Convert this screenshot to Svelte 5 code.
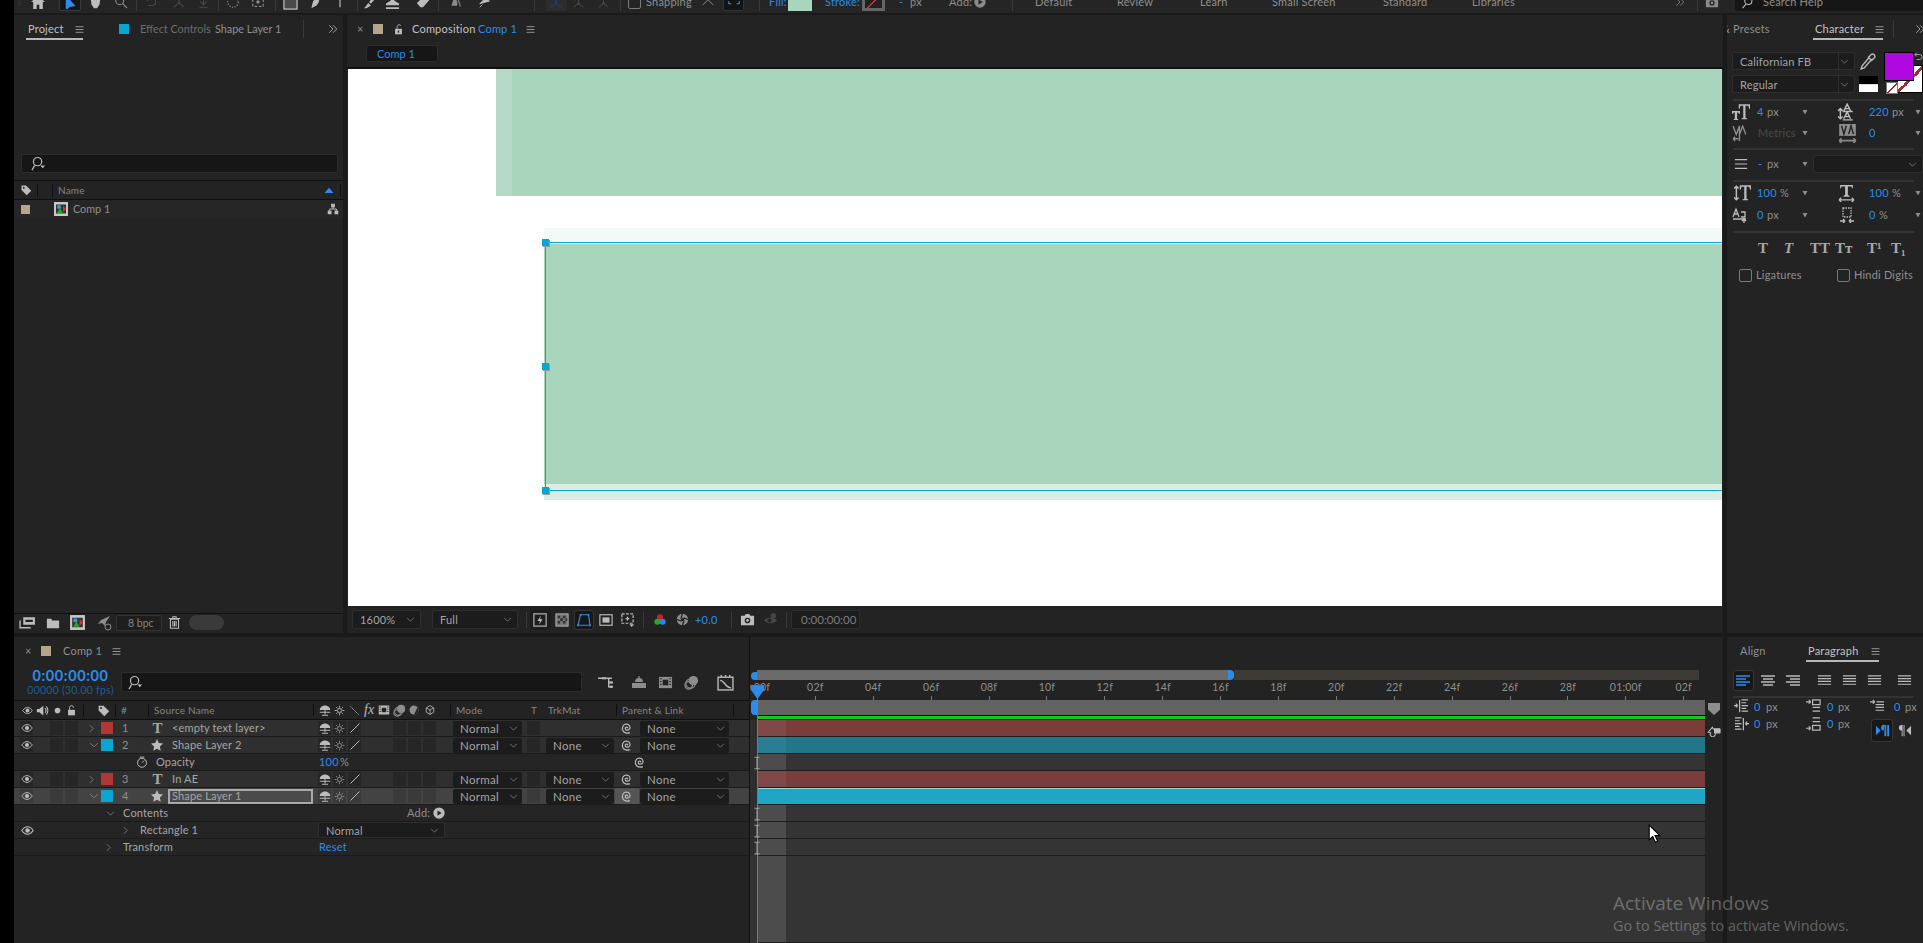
<script>
const F = 'fill="currentColor"';
const S = 'fill="none" stroke="currentColor" stroke-width="1.3"';
const I = {
  grip: `<path d="M5 1h6M5 4h6M5 7h6M5 10h6M5 13h6" ${S} stroke-dasharray="1 1"/>`,
  home: `<path d="M8 1 0 8h2.5v8h4v-5h3v5h4V8H16z" ${F}/>`,
  arrow: `<path d="M2 0v16l4-4 6-1z" ${F} transform="translate(1 -1) scale(1.2)"/>`,
  hand: `<path d="M2 3h12l-1 7-3 5H6L3 10z" ${F}/>`,
  zoom: `<circle cx="6.5" cy="6.5" r="4.5" ${S}/><path d="m10 10 5 5" ${S} stroke-width="2"/>`,
  rot: `<path d="M3 4h7a4 4 0 0 1 1 8H6M3 4l3-3M3 4l3 3" ${S}/>`,
  axis: `<path d="M8 2v7M8 9l-6 5M8 9l6 5" ${S}/><circle cx="8" cy="9" r="1.5" ${F}/>`,
  down: `<path d="M8 1v9M4 7l4 4 4-4" ${S} stroke-width="2"/><path d="M3 14h10" ${S}/>`,
  dashc: `<circle cx="8" cy="8" r="6" ${S} stroke-dasharray="1.5 1.5"/>`,
  dashb: `<path d="M2 2h12v11H2z" ${S} stroke-dasharray="3 2"/><circle cx="8" cy="8" r="2" ${F}/>`,
  rect: `<rect x="1" y="1" width="14" height="14" fill="#4a4a4a" stroke="#ccc" stroke-width="1.2"/>`,
  pen: `<path d="M12 1c2 5-1 10-5 12l-4 2 1-5c1-5 4-8 8-9z" ${F}/>`,
  ttool: `<path d="M3 3h10v2H9v9H7V5H3z" ${F}/>`,
  brush: `<path d="M13 1 7 8l2 2 6-7zM6 9l3 3-5 3H1c2-1 3-4 5-6z" ${F}/>`,
  stamp: `<path d="M6 1h4v5l5 3v2H1V9l5-3zM1 13h14v2H1z" ${F}/>`,
  erase: `<path d="M10 1 1 9l4 5h3l7-8z" ${F}/>`,
  roto: `<path d="M6 2c3 1 5 4 4 10H3z" ${F}/><path d="M11 3l3 10" ${S}/>`,
  pin: `<path d="M2 10 9 3l4 4-4 1zM2 14l3-3" ${F} stroke="currentColor"/>`,
  snapc: `<path d="M2 7v3h3M14 7v3h-3M6 5h1M9 5h1" ${S} stroke-width="1.6"/>`,
  chevR: `<path d="m5 2 6 6-6 6" ${S}/>`,
  chevD: `<path d="m2 5 6 6 6-6" ${S}/>`,
  chevU: `<path d="m1 12 7-7 7 7" ${S} stroke-width="1.8"/>`,
  menu: `<path d="M1 3h14M1 8h14M1 13h14" ${S}/>`,
  dbl: `<path d="m2 2 6 6-6 6M8 2l6 6-6 6" ${S} stroke-width="2.4"/>`,
  lock: `<rect x="3" y="7" width="10" height="8" ${F}/><path d="M5 7V4a3 3 0 0 1 6 0" ${S} stroke-width="1.6"/>`,
  unlock: `<rect x="3" y="7" width="10" height="8" ${F}/><path d="M6 7V3.5a3 3 0 0 1 5.5-1" ${S} stroke-width="1.6"/><rect x="7" y="9.5" width="2" height="3" fill="#222"/>`,
  search: `<circle cx="9" cy="6" r="4.4" ${S}/><path d="M6 10l-4 5" ${S} stroke-width="1.6"/>`,
  searchd: `<circle cx="7" cy="6" r="4.4" ${S}/><path d="M4 10l-3 5" ${S} stroke-width="1.6"/><path d="M10 10h5l-2.5 3z" ${F}/>`,
  tag: `<path d="M2 2h6l7 7-6 6-7-7z" ${F}/><circle cx="5" cy="5" r="1.2" fill="#222"/>`,
  tri: `<path d="M2 12 8 5l6 7z" ${F}/>`,
  triD: `<path d="M3 4h10l-5 9z" ${F}/>`,
  comp: `<rect x="1" y="1" width="14" height="14" fill="#c8c8c8"/><rect x="3" y="3.5" width="10" height="9" fill="#333"/><circle cx="6" cy="6" r="2" fill="#3a9ad9"/><path d="M10 5l3 3-3 3z" fill="#d33"/><path d="M4 12l3-5 3 5z" fill="#2a2"/>`,
  tree: `<path d="M5.5 1h5v5h-5zM1 10h5v5H1zM10 10h5v5h-5z" ${F}/><path d="M8 6v2M3.5 10V8h9v2" ${S}/>`,
  footage: `<path d="M4 3h11v7H4zM6 5.5h7v2H6z" ${F} fill-rule="evenodd"/><path d="M1 6v7h10" ${S}/>`,
  folder: `<path d="M1 3h5l1 2h8v9H1z" ${F}/>`,
  rocket: `<path d="M14 1 5 5l-3 4 4-1 3 3 1-4z" ${F}/><circle cx="12" cy="12" r="3" fill="#232323" stroke="currentColor"/>`,
  trash: `<path d="M3 4h10v11H3zM1 3h14M6 3V1h4v2M6 6v7M8 6v7M10 6v7" ${S}/>`,
  eye: `<path d="M1 8c2-3 4.5-4.5 7-4.5S13 5 15 8c-2 3-4.500 4.500-7 4.500S3 11 1 8z" ${S} stroke-width="1.6"/><circle cx="8" cy="8" r="2.8" ${F}/>`,
  spk: `<path d="M1 6h3l5-4v12l-5-4H1z" ${F}/><path d="M11 5a4 4 0 0 1 0 6M12.500 3a7 7 0 0 1 0 10" ${S}/>`,
  dot: `<circle cx="8" cy="8" r="5" ${F}/>`,
  shy: `<path d="M1 8c0-3 3-6 7-6s7 3 7 6z" ${F}/><path d="M8 7v7M1 11h14" ${S} stroke-width="1.6"/><path d="M4 15h8" ${S} stroke-width="1.6"/>`,
  sun: `<circle cx="8" cy="8" r="3" ${S}/><path d="M8 1v3M8 12v3M1 8h3M12 8h3M3 3l2 2M11 11l2 2M13 3l-2 2M3 13l2-2" ${S}/>`,
  slash: `<path d="m2 14 12-12" ${S} stroke-width="1.5"/>`,
  bslash: `<path d="m2 2 12 12" ${S} stroke-width="1.800" stroke-dasharray="2 1"/>`,
  film: `<path d="M1 2h14v12H1z" ${F}/><path d="M5 5h6v6H5z" fill="#222"/><path d="M2 4h2M2 7h2M2 10h2M12 4h2M12 7h2M12 10h2" stroke="#222"/>`,
  circles: `<circle cx="10" cy="6" r="5" ${F}/><circle cx="7" cy="9" r="5" ${S}/><circle cx="5" cy="11" r="4" ${S}/>`,
  half: `<circle cx="8" cy="8" r="6" ${F} opacity=".7"/><path d="M8 2a6 6 0 0 1 0 12L13 4z" fill="#222"/>`,
  cube: `<path d="m8 1 6 3.500v7L8 15l-6-3.500v-7zM2 4.500l6 3.500 6-3.500M8 8v7" ${S}/>`,
  star: `<path d="m8 0 2.400 5.300 5.600.7-4.100 3.900 1.100 5.800L8 12.900l-5 2.800 1.100-5.800L0 6l5.600-.7z" ${F}/>`,
  spiral: `<path d="M8.500 8.500c.8-1-.5-2-1.700-1.300S5.500 10 7.800 10.400s4-1.300 3.600-3.600S8.400 2.800 5.800 3.800 2 8 3.200 10.800s5 3.700 8 2.500" ${S} stroke-width="1"/>`,
  watch: `<circle cx="8" cy="9" r="6" ${S} stroke-width="1.500"/><path d="M5 1.500h6M8 9l3-3" ${S} stroke-width="1.500"/>`,
  play: `<circle cx="8" cy="8" r="7.500" ${F}/><path d="M6 4.500 11.500 8 6 11.500z" fill="#222"/>`,
  fast: `<rect x="1" y="1" width="14" height="14" ${S}/><path d="M9 3 5 9h3l-1 4 4-6H8z" ${F}/>`,
  check: `<rect x="1" y="1" width="14" height="14" fill="#777" stroke="#bbb"/><path d="M3 3h3v3H3zM9 3h3v3H9zM6 6h3v3H6zM12 6h2v3h-2zM3 9h3v3H3zM9 9h3v3H9z" fill="#333"/>`,
  mask: `<path d="M4 2h9l2 12H1z" ${S} stroke-width="1.300"/><path d="M3 1h2v2H3zM12 1h2v2h-2zM0 13h2v2H0zM14 13h2v2h-2z" ${F}/>`,
  safe: `<rect x="1" y="2" width="14" height="12" ${S}/><rect x="4" y="5" width="8" height="6" ${F}/>`,
  grid: `<rect x="2" y="2" width="12" height="10" ${S} stroke-dasharray="3 1.500"/><path d="M8 5v4M6 7h4" ${S}/><path d="M10 13h5l-2.500 3z" ${F}/>`,
  rgb: `<circle cx="8" cy="5" r="3.500" fill="#c22"/><circle cx="5" cy="10" r="3.500" fill="#2a2"/><circle cx="11" cy="10" r="3.500" fill="#28e"/>`,
  shutter: `<circle cx="8" cy="8" r="7" ${F}/><path d="M8 1 6 7M15 8l-6-2M8 15l2-6M1 8l6 2" stroke="#222" stroke-width="1.500"/><circle cx="8" cy="8" r="2" fill="#222"/>`,
  cam: `<path d="M1 4h4l1-2h4l1 2h4v10H1z" ${F}/><circle cx="8" cy="9" r="3" fill="#222"/><circle cx="8" cy="9" r="1.500" ${F}/>`,
  eyeoff: `<path d="M1 9c3-4 11-4 14 0-3 4-11 4-14 0z" ${F}/><circle cx="11" cy="4" r="3" ${F}/><circle cx="7" cy="9" r="2" fill="#232323"/>`,
  flow: `<path d="M1 4h5M9 4h5M11 4v8h3M11 8h3" ${S}/><rect x="5" y="3" width="4" height="2" ${F}/><rect x="12" y="7" width="3" height="2" ${F}/><rect x="12" y="11" width="3" height="2" ${F}/>`,
  motion: `<path d="M4 8a4 4 0 0 1 8 0z" ${F}/><path d="M1 9h14v5H1z" ${F}/><path d="M8 2v6" ${S}/>`,
  graph: `<rect x="1" y="3" width="14" height="12" ${S}/><path d="M3 6c4 0 5 7 10 7M4 1v2M8 1v2M12 1v2" ${S}/>`,
  shield: `<path d="M0 0h16v9l-8 7-8-7z" ${F}/>`,
  marker: `<path d="M1 10 6 4l1 2h8v5H9a3 3 0 1 1-5 0z" ${S}/><path d="M8 6h8v5H8z" ${F}/>`,
  ibeam: `<path d="M3 1h6M3 15h6M6 1v14" ${S}/>`,
  dropper: `<path d="M11 1a2.500 2.500 0 0 1 3 3l-3 3-3-3zM8 5 2 12l-1 3 3-1 6-7" ${S} stroke-width="1.400"/>`,
  sz: `<path d="M0 7h7v2.500H6L5.500 8.500H4.500V14l1 .5v.7H1.500v-.7l1-.5V8.500H1.500L1 9.500H0z" ${F}/><path d="M6 1h10v4h-.8l-.7-2.500h-2.500v10.500l1.500.8v.7H8.500v-.7l1.500-.8V2.500H7.500L6.800 5H6z" ${F}/>`,
  lead: `<path d="M6 7 9 1l3 6M7 5h4M6 14l3-6 3 6M7 12h4M3 5v9M1 7l2-2 2 2M1 12l2 2 2-2" ${S}/><path d="M5 7.500h9M5 15h9" ${S}/>`,
  kern: `<path d="M1 1l3 8 3-8M7 9l3-8 3 8M7 1v14M1 13h5M1 13l2-2M1 13l2 2" ${S}/>`,
  track: `<rect x="1" y="0" width="14" height="10" ${F}/><path d="M3 1.500l2 7 2-7M9 8.500l2-7 2 7" stroke="#222" stroke-width="1.200" fill="none"/><path d="M1 14h14M1 14l2-2M1 14l2 2M15 14l-2-2M15 14l-2 2" ${S}/>`,
  lines: `<path d="M1 3h14M1 8h14M1 13h14" ${S} stroke-width="2"/>`,
  vscale: `<path d="M3 2v12M1 4l2-2 2 2M1 12l2 2 2-2" ${S}/><path d="M6 1h10v4h-.8l-.7-2.500h-2.500v10.500l1.500.8v.7H8.500v-.7l1.500-.8V2.500H7.500L6.800 5H6z" ${F}/>`,
  hscale: `<path d="M2 0h12v3h-.8l-.5-1.500H9.300v8l1.500.7v.8H5.200v-.8l1.500-.7v-8H3.300L2.800 3H2z" ${F}/><path d="M1 14h14M1 14l2-2M1 14l2 2M15 14l-2-2M15 14l-2 2" ${S}/>`,
  base: `<path d="M1 10 4 2l3 8M2 7h4M9 5h4v5H9M1 12h13" ${S}/><path d="M12 16v-3M10 14l2-2 2 2" ${S}/>`,
  tsume: `<rect x="4" y="1" width="8" height="9" ${S} stroke-dasharray="1.500 1"/><path d="M1 14h5M10 14h5M6 14l-2-2M6 14l-2 2M10 14l2-2M10 14l2 2" ${S}/>`,
  left: `<path d="M1 3h14M1 6h10M1 9h14M1 12h10" ${S}/>`,
  center: `<path d="M1 3h14M3 6h10M1 9h14M3 12h10" ${S}/>`,
  right: `<path d="M1 3h14M5 6h10M1 9h14M5 12h10" ${S}/>`,
  just: `<path d="M1 3h14M1 6h14M1 9h14M1 12h14" ${S}/>`,
  indL: `<path d="M8 1h7M8 4h5M8 7h7M8 10h5M8 13h7M6 1v13M0 7h4M4 7 2 5M4 7 2 9" ${S}/>`,
  indR: `<path d="M1 1h7M1 4h5M1 7h7M1 10h5M1 13h7M10 1v13M16 7h-4M12 7l2-2M12 7l2 2" ${S}/>`,
  indF: `<path d="M0 3h5M5 3 3 1M5 3 3 5M7 3h8M6 6h9M6 9h9M6 12h9" ${S}/>`,
  spB: `<path d="M0 3h5M5 3 3 1M5 3 3 5" ${S}/><rect x="7" y="1" width="8" height="5" ${S}/><path d="M7 9h8M7 13h8" ${S}/>`,
  spA: `<path d="M7 1h8M7 5h8" ${S}/><path d="M0 12h5M5 12l-2-2M5 12l-2 2" ${S}/><rect x="7" y="9" width="8" height="5" ${S}/>`,
  ltr: `<path d="M1 3l5 5-5 5zM13 2h2v12h-2zM10 2h2v12h-2zM10 2a3 3 0 0 0-1 6h2z" ${F}/>`,
  rtl: `<path d="M15 3l-5 5 5 5zM5 2h1v12H5zM7 2h1v12H7zM5 2a3 3 0 0 0 0 6z" ${F}/>`
};
const ic = (i, cx, s = 12, c = '', h) => ({ i, x: cx - s / 2, w: s, h: h ?? s, c });
const tx = (t, x, c = '', w) => ({ t, x, c, w: w ?? Math.ceil(t.length * 6.4) });
const bx = (x, w, h, c = '') => ({ b: 1, x, w, h, c });
const sl = (s, x, w, h, c = '') => ({ s, x, w, h, c });
function place(items, x0) {
  let p = x0;
  return items.map((o) => {
    const r = { ...o, ml: o.x - p };
    p = o.x + o.w;
    return r;
  });
}

const toolbar = [
  ic('grip', 20, 8, 'dim'), ic('home', 38, 14, 'lt'), bx(59, 22, 18, 'toolsel'), ic('arrow', 69, 13, 'blue'),
  ic('hand', 95, 13, 'lt'), ic('zoom', 121, 14), bx(136, 1, 18, 'sep'),
  ic('rot', 150, 14, 'dim'), ic('axis', 179, 14, 'dim'), ic('down', 203, 13, 'dim'), bx(218, 1, 18, 'sep'),
  ic('dashc', 233, 14, 'mid'), ic('dashb', 258, 14), bx(275, 1, 18, 'sep'),
  ic('rect', 290, 15), ic('pen', 315, 13, 'lt'), ic('ttool', 340, 14), bx(357, 1, 18, 'sep'),
  ic('brush', 370, 14, 'lt'), ic('stamp', 392, 15, 'lt'), ic('erase', 423, 14, 'lt'), bx(438, 1, 18, 'sep'),
  ic('roto', 455, 13), ic('pin', 485, 14, 'lt'), bx(534, 1, 18, 'sep'),
  bx(546, 21, 18, 'axisbox'), ic('axis', 556, 14, 'navy'), ic('axis', 578, 13, 'dim'), ic('axis', 603, 13, 'dim'), bx(620, 1, 18, 'sep'),
  bx(628, 13, 13, 'cb'), tx('Snapping', 646, 'g', 48), ic('chevU', 708, 12, 'mid'),
  bx(723, 21, 18, 'snapbox'), ic('snapc', 733.5, 14, 'blue'), bx(759, 1, 18, 'sep'),
  tx('Fill:', 769, 'blue', 18), bx(788, 24, 18, 'fillsw'),
  tx('Stroke:', 825, 'blue', 36), bx(862, 23, 18, 'strokesw'),
  tx('-', 899, 'blue', 6), tx('px', 910, 'g', 14), tx('Add:', 949, 'g', 22), ic('play', 980, 12),
  bx(1012, 1, 18, 'sep'),
  tx('Default', 1035, 'g', 40), tx('Review', 1117, 'g', 40), tx('Learn', 1200, 'g', 40), tx('Small Screen', 1272, 'g', 70),
  tx('Standard', 1383, 'g', 44), tx('Libraries', 1472, 'g', 44),
  ic('dbl', 1680, 10), bx(1697, 1, 18, 'sep'), ic('cam', 1712, 14), bx(1735, 188, 18, 'helpbox'), ic('search', 1747, 13, 'lt'), tx('Search Help', 1763, 'g', 60)
];

const pTabs = [
  tx('Project', 28, 'tab', 36), ic('menu', 79, 9, 'lt'), bx(26, 57, 2, 'ul'), bx(119, 10, 10, 'cy2'),
  tx('Effect Controls', 140, 'dimtxt narrow', 73), tx('Shape Layer 1', 215, 'g narrow', 72), bx(303, 1, 18, 'sep'), ic('dbl', 333, 10, 'lt')
];
const pHead = [
  ic('tag', 26, 12, 'lt'), bx(37, 1, 13, 'hsep'), bx(52, 1, 13, 'hsep'), tx('Name', 58, 'g sm', 30), ic('tri', 329, 12, 'blue'), bx(340, 1, 13, 'hsep')
];
const pRow = [bx(21, 9, 9, 'tan'), ic('comp', 61, 16), tx('Comp 1', 73, 'g narrow', 40), ic('tree', 333, 12, 'lt')];
const pBot = [
  ic('footage', 27.5, 17, 'lt'), ic('folder', 52.5, 14, 'lt'), ic('comp', 77.5, 17), ic('rocket', 103.5, 16, 'mid'),
  sl('8 bpc', 116, 46, 16, 'bpc'), ic('trash', 174, 13, 'lt'), bx(189, 35, 15, 'oval')
];
const cTabs = [
  tx('×', 357, 'g', 8), bx(373, 10, 10, 'tan'), ic('unlock', 398, 11, 'lt'), tx('Composition', 412, 'tab', 64), tx('Comp 1', 478, 'blue', 38), ic('menu', 530, 9, 'lt')
];
const cBar = [
  sl('1600%', 352, 69, 19, 'drop'), sl('Full', 432, 86, 19, 'drop'), bx(526, 1, 16, 'sep'),
  bx(530, 21, 21, 'hl'), ic('fast', 540, 14, 'lt'), ic('check', 562, 14),
  bx(574, 20, 20, 'selbox'), ic('mask', 584, 14, 'blue'), ic('safe', 606, 14, 'lt'), ic('grid', 627, 15, 'lt'), bx(643, 1, 16, 'sep'),
  ic('rgb', 660, 14), ic('shutter', 682, 13, 'mid'), tx('+0.0', 695, 'blue', 24), bx(731, 1, 16, 'sep'),
  ic('cam', 747, 15, 'lt'), ic('eyeoff', 770, 15, 'dim'), bx(786, 1, 16, 'sep'), sl('0:00:00:00', 791, 69, 19, 'time')
];
const chTabs = [
  tx('& Presets', 1722, 'g clipl', 50), tx('Character', 1815, 'tab', 50), ic('menu', 1879, 9, 'lt'), bx(1813, 70, 2, 'ul'), bx(1893, 1, 18, 'sep'), ic('dbl', 1920, 10, 'lt')
];
const chRows = [
  [ic('sz', 1741, 18, 'lt'), tx('4', 1757, 'blue', 8), tx('px', 1767, 'g', 14), ic('triD', 1805, 8, 'mid'), ic('lead', 1846, 18, 'lt'), tx('220', 1869, 'blue', 22), tx('px', 1892, 'g', 14), ic('triD', 1918, 8, 'mid')],
  [ic('kern', 1740, 17, 'mid'), tx('Metrics', 1758, 'dimtxt2', 40), ic('triD', 1805, 8, 'mid'), ic('track', 1847, 19, 'mid'), tx('0', 1869, 'blue', 8), ic('triD', 1918, 8, 'mid')],
];
const chMid = [ic('lines', 1741, 14, 'lt'), tx('-', 1758, 'blue', 6), tx('px', 1767, 'g', 14), ic('triD', 1805, 8, 'mid'), sl('', 1813, 110, 18, 'drop')];
const chRows2 = [
  [ic('vscale', 1742, 18, 'lt'), tx('100', 1757, 'blue', 22), tx('%', 1780, 'g', 10), ic('triD', 1805, 8, 'mid'), ic('hscale', 1846, 17, 'lt'), tx('100', 1869, 'blue', 22), tx('%', 1892, 'g', 10), ic('triD', 1918, 8, 'mid')],
  [ic('base', 1740, 16, 'lt'), tx('0', 1757, 'blue', 8), tx('px', 1767, 'g', 14), ic('triD', 1805, 8, 'mid'), ic('tsume', 1847, 16, 'lt'), tx('0', 1869, 'blue', 8), tx('%', 1879, 'g', 10), ic('triD', 1918, 8, 'mid')]
];
const styleRow = [
  tx('T', 1758, 'gly', 13), tx('T', 1784, 'gly it', 11), tx('TT', 1810, 'gly', 20), tx('Tт', 1835, 'gly', 20), tx('T¹', 1867, 'gly', 18), tx('T₁', 1891, 'gly', 15)
];
const checks = [bx(1739, 13, 13, 'cb'), tx('Ligatures', 1756, 'g', 48), bx(1837, 13, 13, 'cb'), tx('Hindi Digits', 1854, 'g', 60)];
const paTabs = [tx('Align', 1740, 'g', 28), tx('Paragraph', 1808, 'tab', 54), ic('menu', 1875, 9, 'lt'), bx(1806, 73, 2, 'ul')];
const paAlign = [
  bx(1733, 21, 21, 'selbox'), ic('left', 1743, 16, 'blue'), ic('center', 1768, 16, 'lt'), ic('right', 1793, 16, 'lt'),
  ic('just', 1824, 15, 'lt'), ic('just', 1849, 15, 'lt'), ic('just', 1874, 15, 'lt'), ic('just', 1904, 15, 'lt')
];
const paR1 = [ic('indL', 1741, 15, 'lt'), tx('0', 1754, 'blue', 8), tx('px', 1766, 'g', 14), ic('spB', 1813, 15, 'lt'), tx('0', 1827, 'blue', 8), tx('px', 1838, 'g', 14), ic('indF', 1877, 15, 'lt'), tx('0', 1894, 'blue', 8), tx('px', 1905, 'g', 14)];
const paR2 = [ic('indR', 1741, 15, 'lt'), tx('0', 1754, 'blue', 8), tx('px', 1766, 'g', 14), ic('spA', 1813, 15, 'lt'), tx('0', 1827, 'blue', 8), tx('px', 1838, 'g', 14), bx(1871, 22, 23, 'selbox low'), ic('ltr', 1882, 15, 'blue low'), ic('rtl', 1904, 15, 'lt low')];

const tlTab = [tx('×', 25, 'g', 8), bx(41, 10, 10, 'tan'), tx('Comp 1', 63, 'g', 40), ic('menu', 116, 9, 'lt')];
const tlSearch = [
  bx(121, 461, 20, 'srch'), ic('searchd', 135, 15, 'lt'),
  ic('flow', 605, 17, 'lt'), ic('motion', 639, 16, 'mid'), ic('film', 665, 15, 'mid'), ic('circles', 691, 15, 'mid'), ic('graph', 725, 17, 'lt')
];
const tlHead = [
  ic('eye', 27, 11, 'lt'), ic('spk', 42, 13, 'lt'), ic('dot', 57, 9, 'lt'), ic('lock', 71, 11, 'lt'), bx(83, 1, 12, 'hsep'),
  ic('tag', 103, 13, 'lt'), bx(115, 1, 12, 'hsep'), tx('#', 121, 'g sm', 8), bx(148, 1, 12, 'hsep'), tx('Source Name', 154, 'g sm', 58), bx(313, 1, 12, 'hsep'),
  ic('shy', 325, 12, 'lt'), ic('sun', 339, 11, 'lt'), ic('bslash', 354, 11, 'lt'), tx('fx', 364, 'fx', 11), ic('film', 384, 12, 'lt'), ic('circles', 399, 13, 'mid'), ic('half', 414, 12, 'lt'), ic('cube', 430, 10, 'lt'),
  bx(450, 1, 12, 'hsep'), tx('Mode', 456, 'g sm', 26), tx('T', 531, 'g sm', 8), tx('TrkMat', 548, 'g sm', 34), bx(616, 1, 12, 'hsep'), tx('Parent & Link', 622, 'g sm', 58), bx(733, 1, 12, 'hsep')
];
const layers = [
  { n: 1, lab: 'red', open: 0, T: 1, name: '<empty text layer>', trk: 0 },
  { n: 2, lab: 'cyan', open: 1, T: 0, name: 'Shape Layer 2', trk: 1 },
  { n: 3, lab: 'red', open: 0, T: 1, name: 'In AE', trk: 1 },
  { n: 4, lab: 'cyan', open: 1, T: 0, name: 'Shape Layer 1', trk: 1, sel: 1 }
];
const layerItems = (r) => [
  bx(20, 13, 14, 'cell'), ic('eye', 27, 12, 'lt'), bx(50, 13, 14, 'cell'), bx(65, 13, 14, 'cell'),
  ic(r.open ? 'chevD' : 'chevR', r.open ? 93.5 : 91.5, r.open ? 10 : 9, 'mid'), bx(101, 12, 12, r.lab),
  tx(String(r.n), 122, 'g', 8),
  r.T ? tx('T', 152, 'gly big', 11) : ic('star', 157, 12, 'lt'),
  ...(r.sel ? [bx(168, 145, 15, 'edit')] : []),
  tx(r.name, 172, 'nm', 130),
  bx(318, 13, 14, 'cell'), ic('shy', 325, 12, 'lt'), bx(333, 13, 14, 'cell'), ic('sun', 339.5, 11, 'mid'), bx(348, 13, 14, 'cell'), ic('slash', 354.5, 12, 'lt'),
  bx(393, 13, 14, 'cell'), bx(408, 13, 14, 'cell'), bx(423, 13, 14, 'cell'),
  sl('Normal', 453, 69, 15, 'drop tight'), bx(527, 13, 14, 'cell'),
  ...(r.trk ? [sl('None', 546, 68, 15, 'drop tight')] : []),
  ...(r.sel ? [bx(615, 24, 16, 'spbg')] : []),
  ic('spiral', 627, 14, 'lt'), sl('None', 640, 89, 15, 'drop tight')
];
const opac = [ic('watch', 142, 12, 'lt'), tx('Opacity', 156, 'nm', 40), tx('100', 319, 'blue', 20), tx('%', 340, 'g', 10), ic('spiral', 640, 14, 'lt')];
const contents = [ic('chevD', 110, 9, 'mid'), tx('Contents', 123, 'nm', 46), tx('Add:', 407, 'g', 22), ic('play', 439, 12, 'lt')];
const rectR = [bx(20, 14, 14, 'cell'), ic('eye', 27.5, 13, 'lt'), ic('chevR', 125, 9, 'mid'), tx('Rectangle 1', 140, 'nm', 60), sl('Normal', 318, 127, 16, 'drop')];
const transf = [ic('chevR', 108, 9, 'mid'), tx('Transform', 123, 'nm', 50), tx('Reset', 319, 'blue', 28)];
const labels = ['0:00f', '02f', '04f', '06f', '08f', '10f', '12f', '14f', '16f', '18f', '20f', '22f', '24f', '26f', '28f', '01:00f', '02f'];
const tracks = ['b1', 'b2', 'e', 'b1', 'b4', 'e', 'e', 'e'];
</script>

{#snippet line(items, x0, h, cls = '')}
  <div class="line {cls}" style="height:{h}px">
    {#each place(items, x0) as o}
      {#if o.i}
        <svg class="ic {o.c}" style="margin-left:{o.ml}px" width={o.w} height={o.h} viewBox="0 0 16 16">{@html I[o.i]}</svg>
      {:else if o.s !== undefined}
        <span class="sel {o.c}" style="margin-left:{o.ml}px;width:{o.w}px;height:{o.h}px">
          <span>{o.s}</span>
          <svg class="ic chev" width="9" height="9" viewBox="0 0 16 16">{@html I.chevD}</svg>
        </span>
      {:else if o.t !== undefined}
        <span class="tx {o.c}" style="margin-left:{o.ml}px;width:{o.w}px">{o.t}</span>
      {:else}
        <span class="box {o.c}" style="margin-left:{o.ml}px;width:{o.w}px;height:{o.h}px"></span>
      {/if}
    {/each}
  </div>
{/snippet}

<div class="app">
  <div class="strip"></div>
  <div class="main">
    <div class="toolbar">{@render line(toolbar, 14, 20, 'tbline')}</div>

    <div class="tier upper">
      <section class="panel project">
        {@render line(pTabs, 14, 28, 'tabs')}
        <div class="grow"></div>
        <div class="psearch"><svg class="ic lt" width="15" height="15" viewBox="0 0 16 16">{@html I.searchd}</svg></div>
        <div class="phead">{@render line(pHead, 14, 18)}</div>
        <div class="prow">{@render line(pRow, 14, 18)}</div>
        <div class="pfill"></div>
        <div class="pbot">{@render line(pBot, 14, 17)}</div>
      </section>

      <section class="panel comp">
        {@render line(cTabs, 347, 28, 'tabs')}
        <div class="crumbs"><span class="crumb">Comp 1</span></div>
        <div class="canvas">
          <div class="upperR"></div>
          <div class="ghost"></div>
          <div class="rectA"></div>
          <div class="ghost2"></div>
          <div class="cline h1"></div>
          <div class="cline h2"></div>
          <div class="cline v"></div>
          <div class="hd t"></div>
          <div class="hd m"></div>
          <div class="hd b"></div>
        </div>
        {@render line(cBar, 347, 27, 'cbar')}
      </section>

      <section class="panel char">
        {@render line(chTabs, 1727, 28, 'tabs')}
        <div class="colors">
          <div class="strokeBig"></div>
          <div class="fillBig"></div>
          <div class="noneSmall"></div>
          <div class="bw"></div>
          <svg class="swap ic lt" width="10" height="12" viewBox="0 0 16 16">{@html I.rot}</svg>
        </div>
        <div class="v9"></div>
        {@render line([sl('Californian FB', 1732, 123, 18, 'drop split'), ic('dropper', 1868, 17, 'lt')], 1727, 18)}
        <div class="v5"></div>
        {@render line([sl('Regular', 1732, 123, 18, 'drop split')], 1727, 18)}
        <div class="v6"></div>
        <div class="div"></div>
        {@render line(chRows[0], 1727, 21)}
        {@render line(chRows[1], 1727, 22)}
        <div class="v4"></div>
        <div class="div"></div>
        <div class="v5"></div>
        {@render line(chMid, 1727, 18)}
        <div class="v7"></div>
        <div class="div"></div>
        {@render line(chRows2[0], 1727, 22)}
        {@render line(chRows2[1], 1727, 22)}
        <div class="v5"></div>
        <div class="div"></div>
        {@render line(styleRow, 1727, 30)}
        {@render line(checks, 1727, 24)}
      </section>
    </div>

    <div class="tier lower">
      <section class="panel timeline">
        <div class="tlLeft">
          {@render line(tlTab, 14, 28, 'tabs')}
          <div class="timeblock">
            <div class="tc">
              <div class="tcMain">0:00:00:00</div>
              <div class="tcSub">00000 (30.00 fps)</div>
            </div>
            <div class="tlS">{@render line(tlSearch, 14, 32)}</div>
          </div>
          <div class="tlHead">{@render line(tlHead, 14, 18)}</div>
          {#each layers.slice(0, 2) as r}
            <div class="lrow" class:active={r.sel}>{@render line(layerItems(r), 14, 16)}</div>
          {/each}
          <div class="srow">{@render line(opac, 14, 16)}</div>
          {#each layers.slice(2) as r}
            <div class="lrow" class:active={r.sel}>{@render line(layerItems(r), 14, 16)}</div>
          {/each}
          <div class="srow">{@render line(contents, 14, 16)}</div>
          <div class="srow">{@render line(rectR, 14, 16)}</div>
          <div class="srow">{@render line(transf, 14, 16)}</div>
        </div>

        <div class="tlRight">
          <div class="navRow">
            <span class="nh"></span><span class="navA"></span><span class="nh2"></span><span class="navB"></span>
          </div>
          <div class="ruler">
            {#each labels as l}
              <div class="rc"><span class="rl">{l}</span><span class="rt"></span></div>
            {/each}
          </div>
          <div class="work"><span class="wh"></span><span class="wb"></span></div>
          <div class="green"></div>
          {#each tracks as t}
            <div class="track"><span class="tk {t}"></span></div>
          {/each}
          <div class="tfill"><span class="tk e"></span></div>
          <div class="gutter">
            <svg class="ic mid" width="12" height="14" viewBox="0 0 16 16">{@html I.shield}</svg>
            <svg class="ic lt mk" width="14" height="13" viewBox="0 0 16 16">{@html I.marker}</svg>
          </div>
          <div class="ph"></div>
          <svg class="phTop" width="13" height="14" viewBox="0 0 13 14"><path d="M0 0h13v5L6.500 14 0 5z" fill="#2d8ceb"/></svg>
          {#each [754, 805, 822, 839] as y}
            <svg class="ibeam" style="top:{y - 637 + 2}px" width="10" height="14" viewBox="0 0 12 16">{@html I.ibeam}</svg>
          {/each}
        </div>
      </section>

      <section class="panel para">
        {@render line(paTabs, 1727, 28, 'tabs')}
        <div class="v5"></div>
        {@render line(paAlign, 1727, 21)}
        <div class="v5"></div>
        <div class="div"></div>
        {@render line(paR1, 1727, 17)}
        {@render line(paR2, 1727, 18)}
      </section>
    </div>
  </div>

  <svg class="cursor" width="13" height="19" viewBox="0 0 12 18"><path d="M1 1v14l3.300-3.200 2.500 5.500 2.200-1-2.500-5.300H11z" fill="#fff" stroke="#000"/></svg>
  <div class="watermark">
    <div class="w1">Activate Windows</div>
    <div class="w2">Go to Settings to activate Windows.</div>
  </div>
</div>

<style>
  :global(body) { margin: 0; background: #000; overflow: hidden; }
  .app { position: relative; width: 1923px; height: 943px; display: flex; overflow: hidden; font-family: Lato, "Open Sans", sans-serif; font-size: 11px; color: #9b9b9b; }
  .strip { width: 14px; background: #000; flex: none; }
  .main { width: 1909px; display: flex; flex-direction: column; background: #1a1a1a; }
  .toolbar { height: 13px; margin-bottom: 2px; background: #252525; overflow: hidden; flex: none; }
  .tbline { margin-top: -8px; }
  .tier { display: flex; gap: 4px; flex: none; }
  .upper { height: 618px; margin-bottom: 4px; }
  .lower { height: 306px; }
  .panel { background: #232323; display: flex; flex-direction: column; position: relative; flex: none; }
  .project { width: 329px; }
  .comp { width: 1376px; }
  .char, .para { width: 196px; }
  .timeline { width: 1709px; flex-direction: row; }

  .line { display: flex; align-items: center; flex: none; white-space: nowrap; }
  .ic { flex: none; display: block; color: #8a8a8a; overflow: hidden; }
  .tx { flex: none; display: block; letter-spacing: .2px; line-height: 14px; }
  .box { flex: none; display: block; box-sizing: border-box; }
  .sel { flex: none; display: flex; align-items: center; justify-content: space-between; box-sizing: border-box; }
  .lt { color: #bcbcbc; }
  .mid { color: #8d8d8d; }
  .dim { color: #454545; }
  .navy { color: #1e3f70; }
  .blue { color: #2d8ceb; }
  .g { color: #8f8f8f; }
  .sm { font-size: 10px; color: #868686; }
  .tab { color: #c2c2c2; }
  .dimtxt { color: #6d6d6d; }
  .dimtxt2 { color: #4b4b4b; }
  .narrow { letter-spacing: 0; font-size: 10.800px; }
  .nm { color: #a5a5a5; font-size: 11px; letter-spacing: .15px; }
  .gly { font-family: "Liberation Serif", serif; font-size: 15px; font-weight: 700; color: #a8a8a8; letter-spacing: 0; }
  .big { font-size: 15px; text-align: center; }
  .it { font-style: italic; }
  .fx { font-family: "Liberation Serif", serif; font-style: italic; font-size: 14px; color: #bcbcbc; }
  .clipl { clip-path: inset(0 0 0 5px); }

  .sep { background: #3a3a3a; }
  .hsep { background: #0f0f0f; width: 2px; }
  .toolsel { background: #161616; border: 1px solid #3a3a3a; border-radius: 2px; }
  .axisbox { background: #2d2d2d; border-radius: 2px; }
  .snapbox { background: #141414; border: 1px solid #333; border-radius: 2px; }
  .cb { border: 1.5px solid #7a7a7a; border-radius: 2px; }
  .fillsw { background: #aad5bd; }
  .strokesw { background: linear-gradient(135deg, #222 48%, #c33 48%, #c33 54%, #222 54%); border: 3px solid #666; }
  .helpbox { background: #161616; border-radius: 2px; }
  .ul { background: #b8b8b8; align-self: flex-end; margin-bottom: 3px; }
  .cy2, .cyan { background: #0aa6d3; }
  .red { background: #b23636; }
  .tan { background: #b5a68a; }
  .bpc { background: #1e1e1e; border: 1px solid #333; border-radius: 2px; color: #848484; font-size: 10.500px; padding-left: 11px; }
  .bpc :global(svg) { display: none; }
  .oval { background: #3a3a3a; border-radius: 8px; }
  .drop { background: #1c1c1c; border: 1px solid #2e2e2e; border-radius: 2px; color: #a5a5a5; padding: 0 5px 0 7px; font-size: 11px; letter-spacing: .2px; }
  .tight { border: 0; padding: 0 4px 0 7px; font-size: 11.500px; letter-spacing: .3px; }
  .split { background: linear-gradient(90deg, #1c1c1c 105px, #2e2e2e 105px, #2e2e2e 106px, #1c1c1c 106px); }
  .time { background: #1c1c1c; border: 1px solid #2e2e2e; border-radius: 2px; color: #7d7d7d; padding-left: 9px; font-size: 11.500px; }
  .time :global(svg) { display: none; }
  .hl { background: #1d1d1d; border-radius: 2px; }
  .selbox { background: #171717; border: 1px solid #363636; border-radius: 3px; }
  .low { margin-top: 13px; }

  .grow { height: 111px; flex: none; }
  .psearch { height: 19px; margin: 0 5px 0 7px; padding-left: 9px; background: #161616; border: 1px solid #2c2c2c; border-radius: 2px; box-sizing: border-box; display: flex; align-items: center; flex: none; }
  .phead { margin-top: 7px; border-top: 1px solid #0f0f0f; border-bottom: 1px solid #0f0f0f; flex: none; }
  .prow { background: #262626; flex: none; }
  .pfill { flex: 1; }
  .pbot { height: 18px; margin-bottom: 1px; border-top: 1px solid #111; flex: none; }

  .crumbs { height: 26px; padding-top: 2px; box-sizing: border-box; border-bottom: 2px solid #111; flex: none; }
  .crumb { display: block; width: 72px; height: 17px; margin-left: 19px; padding-left: 10px; box-sizing: border-box; background: #161616; border: 1px solid #2c2c2c; border-radius: 2px; color: #2d8ceb; line-height: 15px; }
  .canvas { position: relative; height: 537px; background: #fff; overflow: hidden; margin-left: 1px; margin-right: 1px; flex: none; }
  .upperR { position: absolute; left: 148px; top: 0; right: 0; height: 127px; background: linear-gradient(90deg, #b5d9c6 16px, #aad5bd 16px); }
  .ghost { position: absolute; left: 196px; right: 0; top: 159px; height: 16px; background: #f3f9f6; }
  .rectA { position: absolute; left: 196px; right: 0; top: 175px; height: 240px; background: #aad5bd; }
  .ghost2 { position: absolute; left: 196px; right: 0; top: 415px; height: 16px; background: #daede3; }
  .cline { position: absolute; background: #0aa6d3; }
  .h1 { left: 197px; right: 0; top: 173px; height: 1px; }
  .h2 { left: 197px; right: 0; top: 421px; height: 1px; }
  .v { left: 197px; top: 173px; width: 1px; height: 248px; }
  .hd { position: absolute; left: 194px; width: 7px; height: 7px; background: #0aa6d3; box-shadow: 1px 1px 0 #999; }
  .t { top: 170px; }
  .m { top: 294px; }
  .b { top: 418px; }
  .cbar { background: #232323; }

  .colors { position: absolute; left: 0; top: 0; width: 196px; height: 100px; }
  .fillBig { position: absolute; left: 157px; top: 37px; width: 30px; height: 29px; background: #b008e0; border: 1px solid #000; box-sizing: border-box; }
  .strokeBig { position: absolute; left: 170px; top: 50px; width: 26px; height: 28px; box-sizing: border-box; border: 1px solid #000; background: linear-gradient(135deg, #fff 48%, #a52a2a 48%, #a52a2a 56%, #fff 56%); }
  .noneSmall { position: absolute; left: 159px; top: 67px; width: 10px; height: 10px; border: 1px solid #777; background: linear-gradient(135deg, #fff 46%, #a52a2a 46%, #a52a2a 56%, #fff 56%); }
  .bw { position: absolute; left: 132px; top: 61px; width: 19px; height: 16px; background: linear-gradient(180deg, #000 50%, #ddd 50%, #ddd 56%, #fff 56%); }
  .swap { position: absolute; left: 186px; top: 36px; }
  .div { height: 2px; background: #333; margin: 0 9px 0 6px; flex: none; }
  .v4 { height: 4px; flex: none; }
  .v5 { height: 5px; flex: none; }
  .v6 { height: 6px; flex: none; }
  .v7 { height: 7px; flex: none; }
  .v9 { height: 9px; flex: none; }

  .tlLeft { width: 735px; flex: none; border-right: 1px solid #111; }
  .timeblock { display: flex; height: 35px; position: relative; }
  .tc { position: absolute; left: 0; top: 2px; width: 107px; text-align: center; }
  .tcMain { color: #2d8ceb; font-size: 14.500px; font-weight: 700; letter-spacing: .6px; line-height: 17px; padding-left: 6px; }
  .tcSub { color: #1f5c96; font-size: 10.500px; line-height: 13px; letter-spacing: .25px; padding-left: 6px; white-space: nowrap; }
  .tlS { position: absolute; left: 0; top: 1px; width: 735px; }
  .srch { background: #161616; border: 1px solid #2c2c2c; border-radius: 2px; }
  .tlHead { border-top: 1px solid #0f0f0f; border-bottom: 1px solid #0f0f0f; height: 20px; box-sizing: border-box; }
  .lrow, .srow { height: 17px; box-sizing: border-box; border-bottom: 1px solid #1a1a1a; }
  .lrow { background: #2f2f2f; }
  .srow { background: #252525; }
  .active { background: #434343; }
  .cell { background: #262626; }
  .active .cell { background: #3a3a3a; }
  .edit { background: #4a4a4a; border: 2px solid #a9a9a9; }
  .spbg { background: #555; }

  .tlRight { position: relative; width: 973px; flex: none; display: flex; flex-direction: column; padding-top: 33px; box-sizing: border-box; overflow: hidden; }
  .navRow { display: flex; height: 10px; margin-left: 1px; flex: none; }
  .nh, .nh2 { width: 6px; background: #2d8ceb; border-radius: 4px 0 0 4px; margin-top: 2px; }
  .nh2 { border-radius: 0 4px 4px 0; margin-top: 0; }
  .navA { width: 471px; background: #6b6b6b; }
  .navB { width: 465px; background: #3e3a36; }
  .ruler { height: 20px; display: flex; margin-left: -21.500px; flex: none; }
  .rc { width: 57.900px; flex: none; display: flex; flex-direction: column; align-items: center; }
  .rl { height: 16px; line-height: 14px; color: #8f8f8f; font-size: 10.500px; letter-spacing: .2px; }
  .rt { width: 1px; height: 4px; background: #777; }
  .work { height: 15px; display: flex; flex: none; padding-left: 1px; }
  .wh { width: 6px; background: #2d8ceb; border-radius: 4px 0 0 4px; }
  .wb { width: 948px; background: #636363; }
  .green { height: 5px; margin-left: 7px; width: 948px; background: #14c814; border-top: 1px solid #111; border-bottom: 1px solid #111; box-sizing: border-box; flex: none; }
  .track { height: 17px; padding-left: 7px; width: 955px; box-sizing: border-box; display: flex; flex: none; background: #2e2e2e; }
  .tfill { flex: 1; padding-left: 7px; width: 955px; box-sizing: border-box; display: flex; background: #333; }
  .tk { width: 948px; display: block; border-bottom: 1px solid #1d1d1d; }
  .b1 { background: linear-gradient(90deg, #804848 29px, #7b3c3c 29px); }
  .b2 { background: linear-gradient(90deg, #2a7d93 29px, #23758a 29px); }
  .b4 { background: #20a5c4; border-top: 1px solid #8dd; }
  .e { background: linear-gradient(90deg, #4c4c4c 29px, #343434 29px); }
  .gutter { position: absolute; left: 955px; top: 65px; width: 18px; display: flex; flex-direction: column; align-items: center; gap: 8px; }
  .ph { position: absolute; left: 7px; top: 61px; bottom: 0; width: 1px; background: #2d8ceb; }
  .phTop { position: absolute; left: 1px; top: 48px; }
  .ibeam { position: absolute; left: 2px; color: #a0a0a0; }

  .cursor { position: absolute; left: 1648px; top: 824px; }
  .watermark { position: absolute; left: 1613px; top: 890px; font-family: "Open Sans", sans-serif; color: rgba(255,255,255,.3); pointer-events: none; }
  .w1 { font-size: 19px; line-height: 26px; }
  .w2 { font-size: 14.400px; line-height: 19px; white-space: nowrap; }
</style>
